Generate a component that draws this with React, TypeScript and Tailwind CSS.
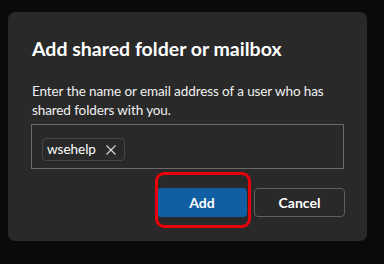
export default function App() {
  return (
    <div className="w-[384px] h-[264px] bg-[#0a0a0a] pt-[12px] pl-[8px] overflow-hidden" style={{ fontFamily: 'Lato, "Open Sans", sans-serif' }}>
      <div className="w-[359px] h-[229px] rounded-[7px] bg-[#292929] pl-[24px] pr-[23px] pt-[24px] text-white">
        {/* Title */}
        <h1 className="text-[19.5px] leading-[26px] font-bold">Add shared folder or mailbox</h1>

        {/* Description */}
        <p className="mt-[20px] text-[13.5px] leading-[19px] tracking-[-0.1px] text-[#f0f0f0]">
          Enter the name or email address of a user who has shared folders with you.
        </p>

        {/* Recipient input */}
        <div className="mt-[4px] -ml-[1px] h-[45px] border border-[#6a6a6a] pl-[10px] pt-[11px]">
          <div className="inline-flex h-[23px] items-center gap-[10px] rounded-[4px] border border-[#474747] pl-[4px] pr-[8px]">
            <span className="text-[13.5px] leading-none">wsehelp</span>
            <svg width="10" height="10" viewBox="0 0 10 10" className="text-[#dcdcdc]">
              <path d="M0.5 0.5 L9.5 9.5 M9.5 0.5 L0.5 9.5" stroke="currentColor" strokeWidth="1.1" fill="none" />
            </svg>
          </div>
        </div>

        {/* Actions */}
        <div className="mt-[19px] flex justify-end gap-[7px] -mr-[1px]">
          <div className="relative">
            <button className="h-[29px] w-[90px] rounded-[4px] bg-[#115ea3] text-[14px] font-bold">Add</button>
            <div className="absolute -left-[2px] -right-[4px] -top-[16px] -bottom-[11px] rounded-[9px] border-[3px] border-[#e8000b]" />
          </div>
          <button className="h-[29px] w-[91px] rounded-[4px] border border-[#5f5f5f] text-[14px] font-bold">Cancel</button>
        </div>
      </div>
    </div>
  );
}
